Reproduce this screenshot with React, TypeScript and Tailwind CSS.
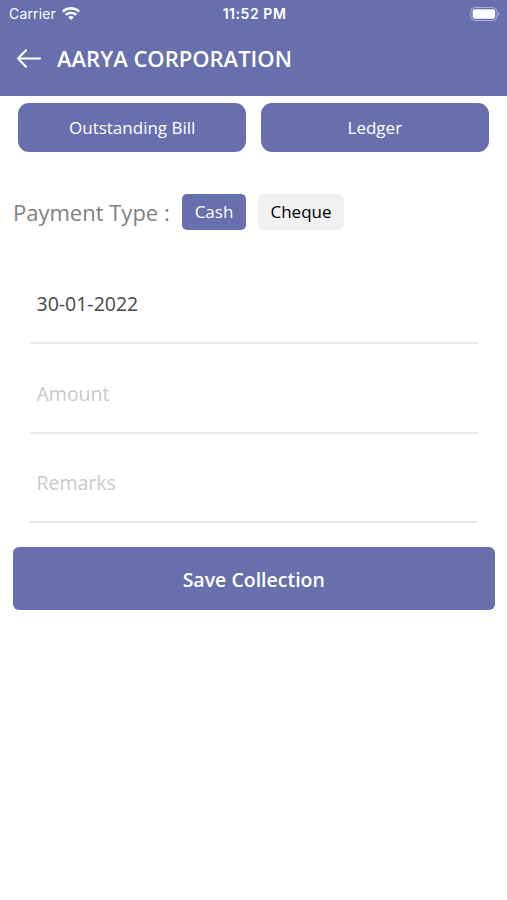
import { useState } from "react";

function StatusBar() {
  return (
    <div className="grid h-[27px] grid-cols-3 items-center pl-[9px] pr-[7px] text-white font-['Inter',sans-serif]">
      <div className="flex items-center gap-[6px]">
        <span className="text-[14px] leading-none tracking-[0.15px]">Carrier</span>
        <svg width="18" height="13" viewBox="0 0 18 13" fill="none" stroke="white" strokeWidth="2.6">
          <path d="M0.9 4.6a11.6 11.6 0 0 1 16.2 0" />
          <path d="M3.8 7.9a7.2 7.2 0 0 1 10.4 0" />
          <path d="M6.2 10.3a4 4 0 0 1 5.6 0L9 13z" fill="white" stroke="none" />
        </svg>
      </div>
      <span className="text-center text-[14px] font-semibold leading-none tracking-[0.55px]">11:52 PM</span>
      <div className="flex justify-end">
        <svg width="30" height="14" viewBox="0 0 30 14" fill="none">
          <rect x="0.9" y="0.5" width="26" height="13" rx="4" stroke="#a9aed3" />
          <rect x="2.7" y="2.3" width="22.4" height="9.4" rx="2" fill="white" />
          <path d="M28.2 5c1.6.6 1.6 3.4 0 4z" fill="#a9aed3" />
        </svg>
      </div>
    </div>
  );
}

function Field({ value, placeholder }: { value?: string; placeholder?: string }) {
  return (
    <input
      className="block h-[89.6px] w-full border-b-2 border-[#e9e9e9] bg-transparent px-[6.5px] pt-[11px] text-[19.5px] text-[#484848] outline-none placeholder:text-[#c9c9c9]"
      defaultValue={value}
      placeholder={placeholder}
    />
  );
}

export default function App() {
  const [type, setType] = useState("Cash");

  return (
    <div className="min-h-screen w-full bg-white font-['Open_Sans',sans-serif]">
      <header className="h-24 bg-[#676fac]">
        <StatusBar />
        <div className="flex h-[62px] items-center pl-[17px] text-white">
          <svg width="24" height="20" viewBox="0 0 24 20" fill="none" stroke="white" strokeWidth="2" strokeLinecap="round" strokeLinejoin="round">
            <path d="M23 10.5H1M9 2.3L1 10.5l8 8.2" />
          </svg>
          <h1 className="ml-4 text-[22px] font-semibold">AARYA CORPORATION</h1>
        </div>
      </header>

      <div className="flex gap-[15px] px-[18.4px] pt-[7px]">
        {["Outstanding Bill", "Ledger"].map((label) => (
          <button key={label} className="h-[49px] flex-1 rounded-[11px] bg-[#676fac] text-[17px] text-white">
            {label}
          </button>
        ))}
      </div>

      <div className="mt-[42px] flex h-9 items-center pl-[13px]">
        <span className="w-[169px] whitespace-nowrap text-[22px] text-[#808080]">Payment Type :</span>
        <button
          onClick={() => setType("Cash")}
          className={`h-9 w-16 rounded-[5px] text-[17px] ${type === "Cash" ? "bg-[#676fac] text-white" : "bg-[#f1f1f1] text-black"}`}
        >
          Cash
        </button>
        <button
          onClick={() => setType("Cheque")}
          className={`ml-3 h-9 w-[86px] rounded-[5px] text-[17px] ${type === "Cheque" ? "bg-[#676fac] text-white" : "bg-[#f1f1f1] text-black"}`}
        >
          Cheque
        </button>
      </div>

      <div className="mt-[24.4px] pl-[30px] pr-[29px]">
        <Field value="30-01-2022" />
        <Field placeholder="Amount" />
        <Field placeholder="Remarks" />
      </div>

      <div className="pl-[13px] pr-[12.5px] pt-6">
        <button className="h-[63px] w-full rounded-[6px] bg-[#676fac] pt-px text-[19.5px] font-semibold text-white">
          Save Collection
        </button>
      </div>
    </div>
  );
}
